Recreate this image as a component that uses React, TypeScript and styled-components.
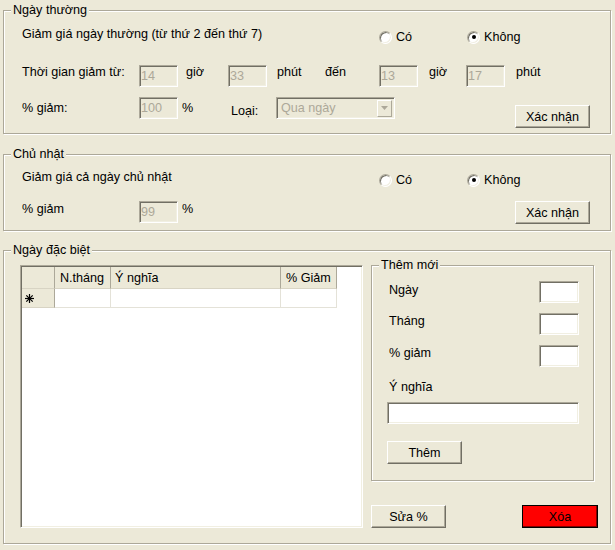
import React from "react";
import styled, { createGlobalStyle } from "styled-components";

const FONT = `12.6px "Liberation Sans", Arial, sans-serif`;

const Global = createGlobalStyle`
  html, body { margin: 0; padding: 0; background: #ECE9D8; }
  body { font: ${FONT}; color: #000; }
`;

const Window = styled.div`
  width: 615px;
  height: 550px;
  box-sizing: border-box;
  padding: 3px 4px 0 3px;
  background: #ECE9D8;
  display: flex;
  flex-direction: column;
  overflow: hidden;
`;

const Group = styled.fieldset<{ $mt?: number; $w?: number }>`
  margin: ${(p) => p.$mt ?? 0}px 0 0 0;
  padding: 0;
  min-width: 0;
  width: ${(p) => (p.$w ? `${p.$w}px` : "auto")};
  box-sizing: border-box;
  border: 1px solid #ACA899;
  box-shadow: 1px 1px 0 #fff, inset 1px 1px 0 #fff;
`;

const Legend = styled.legend`
  margin-left: 7px;
  padding: 0 2px;
  line-height: 14px;
  font: ${FONT};
  line-height: 14px;
  background: #ECE9D8;
`;

const Body = styled.div<{ $pad: string }>`
  display: flex;
  flex-direction: column;
  padding: ${(p) => p.$pad};
`;

const Row = styled.div<{ $mt?: number }>`
  display: flex;
  align-items: flex-start;
  margin-top: ${(p) => p.$mt ?? 0}px;
`;

const Cell = styled.span<{ $w?: number; $pl?: number; $mt?: number }>`
  flex-shrink: 0;
  box-sizing: border-box;
  width: ${(p) => (p.$w ? `${p.$w}px` : "auto")};
  padding-left: ${(p) => p.$pl ?? 0}px;
  margin-top: ${(p) => p.$mt ?? 0}px;
  line-height: 16px;
  white-space: nowrap;
`;

const TextBox = styled.input<{ $w: number; $mt?: number }>`
  flex-shrink: 0;
  width: ${(p) => p.$w}px;
  height: 22px;
  margin: ${(p) => p.$mt ?? 0}px 0 0 0;
  box-sizing: border-box;
  padding: 0 1px;
  font: ${FONT};
  color: #000;
  background: #fff;
  border: 1px solid;
  border-color: #ACA899 #fff #fff #ACA899;
  box-shadow: inset 1px 1px 0 #716F64, inset -1px -1px 0 #F1EFE2;
  outline: none;
  &:disabled {
    background: #ECE9D8;
    color: #ACA899;
    -webkit-text-fill-color: #ACA899;
    opacity: 1;
  }
`;

const Radio = styled.span<{ $w?: number; $mt?: number }>`
  flex-shrink: 0;
  display: flex;
  align-items: center;
  gap: 4px;
  width: ${(p) => (p.$w ? `${p.$w}px` : "auto")};
  margin-top: ${(p) => p.$mt ?? 0}px;
  line-height: 16px;
`;

const RadioDot = styled.span<{ $on?: boolean }>`
  width: 13px;
  height: 13px;
  box-sizing: border-box;
  border-radius: 50%;
  border: 1px solid;
  border-color: #ACA899 #fff #fff #ACA899;
  box-shadow: inset 1px 1px 0 #716F64, inset -1px -1px 0 #F1EFE2;
  background: #fff;
  display: flex;
  align-items: center;
  justify-content: center;
  &::after {
    content: "";
    display: ${(p) => (p.$on ? "block" : "none")};
    width: 4px;
    height: 4px;
    border-radius: 50%;
    background: #000;
  }
`;

const Btn = styled.button<{ $w: number; $mt?: number; $danger?: boolean; $auto?: boolean }>`
  flex-shrink: 0;
  width: ${(p) => p.$w}px;
  height: 23px;
  margin: ${(p) => p.$mt ?? 0}px 0 0 ${(p) => (p.$auto ? "auto" : "0")};
  padding: 0;
  font: ${FONT};
  color: #000;
  background: ${(p) => (p.$danger ? "#FF0000" : "#ECE9D8")};
  border: 1px solid;
  border-color: ${(p) => (p.$danger ? "#000" : "#fff #716F64 #716F64 #fff")};
  box-shadow: ${(p) => (p.$danger ? "inset -1px -1px 0 #800000" : "inset -1px -1px 0 #ACA899")};
`;

const Combo = styled.div<{ $w: number }>`
  flex-shrink: 0;
  width: ${(p) => p.$w}px;
  height: 22px;
  box-sizing: border-box;
  display: flex;
  align-items: center;
  padding: 2px 2px 2px 4px;
  background: #ECE9D8;
  color: #ACA899;
  border: 1px solid;
  border-color: #ACA899 #fff #fff #ACA899;
  box-shadow: inset 1px 1px 0 #716F64, inset -1px -1px 0 #F1EFE2;
  line-height: 16px;
`;

const ComboArrow = styled.span`
  margin-left: auto;
  width: 15px;
  height: 17px;
  box-sizing: border-box;
  border: 1px solid;
  border-color: #fff #ACA899 #ACA899 #fff;
  display: flex;
  align-items: center;
  justify-content: center;
`;

const Split = styled.div`
  display: flex;
  align-items: flex-start;
  gap: 8px;
`;

const GridBox = styled.div`
  flex-shrink: 0;
  width: 343px;
  height: 263px;
  margin-top: 7px;
  box-sizing: border-box;
  padding: 1px;
  background: #fff;
  border: 1px solid;
  border-color: #ACA899 #fff #fff #ACA899;
  box-shadow: inset 1px 1px 0 #716F64, inset -1px -1px 0 #F1EFE2;
`;

const GridRow = styled.div`
  display: flex;
`;

const HeadCell = styled.div<{ $w: number; $pl?: number }>`
  width: ${(p) => p.$w}px;
  height: 22px;
  box-sizing: border-box;
  padding-left: ${(p) => p.$pl ?? 0}px;
  display: flex;
  align-items: center;
  line-height: 16px;
  background: #ECE9D8;
  border-right: 1px solid #ACA899;
  border-bottom: 1px solid #D8D4C4;
  white-space: nowrap;
`;

const DataCell = styled.div<{ $w: number; $head?: boolean }>`
  width: ${(p) => p.$w}px;
  height: 19px;
  box-sizing: border-box;
  display: flex;
  align-items: center;
  padding-left: 3px;
  background: ${(p) => (p.$head ? "#ECE9D8" : "#fff")};
  border-right: 1px solid ${(p) => (p.$head ? "#ACA899" : "#E4E2D8")};
  border-bottom: 1px solid ${(p) => (p.$head ? "#D8D4C4" : "#E4E2D8")};
`;

const SideCol = styled.div`
  width: 227px;
  flex-shrink: 0;
  display: flex;
  flex-direction: column;
`;

const FormRow = styled.div<{ $mt?: number }>`
  display: flex;
  justify-content: space-between;
  align-items: flex-start;
  margin-top: ${(p) => p.$mt ?? 0}px;
`;

const FormLabel = styled.span<{ $mt?: number }>`
  margin-left: 2px;
  margin-top: ${(p) => p.$mt ?? 0}px;
  line-height: 16px;
`;

const ButtonBar = styled.div`
  display: flex;
  justify-content: space-between;
  margin-top: 24px;
`;

const Star = () => (
  <svg width="9" height="9" viewBox="0 0 9 9">
    <g stroke="#000" strokeWidth="1.2">
      <line x1="4.5" y1="0" x2="4.5" y2="9" />
      <line x1="0" y1="4.5" x2="9" y2="4.5" />
      <line x1="1.3" y1="1.3" x2="7.7" y2="7.7" />
      <line x1="7.7" y1="1.3" x2="1.3" y2="7.7" />
    </g>
  </svg>
);

const Arrow = () => (
  <svg width="7" height="4" viewBox="0 0 7 4">
    <polygon points="0,0 7,0 3.5,4" fill="#ACA899" />
  </svg>
);

export default function App() {
  return (
    <>
      <Global />
      <Window>
        <Group>
          <Legend>Ngày thường</Legend>
          <Body $pad="9px 20px 5px 18px">
            <Row>
              <Cell $w={357}>Giảm giá ngày thường (từ thứ 2 đến thứ 7)</Cell>
              <Radio $w={88} $mt={3}>
                <RadioDot />
                Có
              </Radio>
              <Radio $mt={3}>
                <RadioDot $on />
                Không
              </Radio>
            </Row>
            <Row $mt={19}>
              <Cell $w={117}>Thời gian giảm từ:</Cell>
              <TextBox $w={39} $mt={1} disabled defaultValue="14" />
              <Cell $w={50} $pl={8}>giờ</Cell>
              <TextBox $w={39} $mt={1} disabled defaultValue="33" />
              <Cell $w={58} $pl={10}>phút</Cell>
              <Cell $w={54}>đến</Cell>
              <TextBox $w={39} $mt={1} disabled defaultValue="13" />
              <Cell $w={48} $pl={11}>giờ</Cell>
              <TextBox $w={39} $mt={1} disabled defaultValue="17" />
              <Cell $pl={11}>phút</Cell>
            </Row>
            <Row $mt={10}>
              <Cell $w={117} $mt={3}>% giảm:</Cell>
              <TextBox $w={39} disabled defaultValue="100" />
              <Cell $w={53} $pl={4} $mt={3}>%</Cell>
              <Cell $w={45} $mt={6}>Loại:</Cell>
              <Combo $w={119}>
                Qua ngày
                <ComboArrow>
                  <Arrow />
                </ComboArrow>
              </Combo>
              <Btn $w={75} $mt={8} $auto>Xác nhận</Btn>
            </Row>
          </Body>
        </Group>

        <Group $mt={13}>
          <Legend>Chủ nhật</Legend>
          <Body $pad="8px 20px 6px 18px">
            <Row>
              <Cell $w={357}>Giảm giá cả ngày chủ nhật</Cell>
              <Radio $w={88} $mt={3}>
                <RadioDot />
                Có
              </Radio>
              <Radio $mt={3}>
                <RadioDot $on />
                Không
              </Radio>
            </Row>
            <Row $mt={13}>
              <Cell $w={117}>% giảm</Cell>
              <TextBox $w={39} disabled defaultValue="99" />
              <Cell $pl={4}>%</Cell>
              <Btn $w={75} $auto>Xác nhận</Btn>
            </Row>
          </Body>
        </Group>

        <Group $mt={12}>
          <Legend>Ngày đặc biệt</Legend>
          <Body $pad="1px 0 15px 16px">
            <Split>
              <GridBox>
                <GridRow>
                  <HeadCell $w={33} />
                  <HeadCell $w={56} $pl={5}>N.tháng</HeadCell>
                  <HeadCell $w={170} $pl={4}>Ý nghĩa</HeadCell>
                  <HeadCell $w={56} $pl={5}>% Giảm</HeadCell>
                </GridRow>
                <GridRow>
                  <DataCell $w={33} $head>
                    <Star />
                  </DataCell>
                  <DataCell $w={56} />
                  <DataCell $w={170} />
                  <DataCell $w={56} />
                </GridRow>
              </GridBox>
              <SideCol>
                <Group $w={223}>
                  <Legend>Thêm mới</Legend>
                  <Body $pad="9px 14px 16px 15px">
                    <FormRow>
                      <FormLabel $mt={1}>Ngày</FormLabel>
                      <TextBox $w={40} />
                    </FormRow>
                    <FormRow $mt={10}>
                      <FormLabel>Tháng</FormLabel>
                      <TextBox $w={40} />
                    </FormRow>
                    <FormRow $mt={10}>
                      <FormLabel>% giảm</FormLabel>
                      <TextBox $w={40} />
                    </FormRow>
                    <FormRow $mt={12}>
                      <FormLabel>Ý nghĩa</FormLabel>
                    </FormRow>
                    <FormRow $mt={7}>
                      <TextBox $w={192} />
                    </FormRow>
                    <FormRow $mt={17}>
                      <Btn $w={75}>Thêm</Btn>
                    </FormRow>
                  </Body>
                </Group>
                <ButtonBar>
                  <Btn $w={75}>Sửa %</Btn>
                  <Btn $w={76} $danger>Xóa</Btn>
                </ButtonBar>
              </SideCol>
            </Split>
          </Body>
        </Group>
      </Window>
    </>
  );
}
